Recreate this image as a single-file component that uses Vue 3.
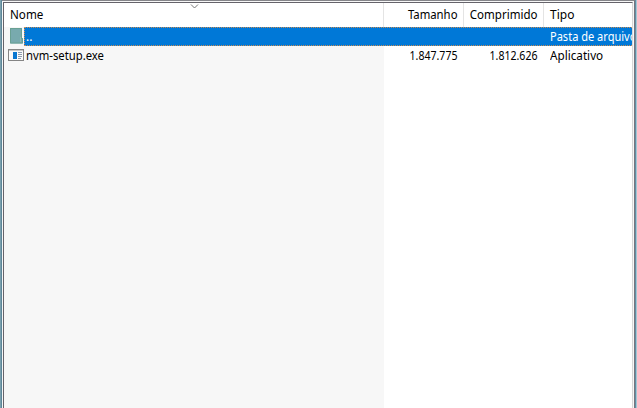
<script setup>
const files = [
  { name: '..', size: '', packed: '', type: 'Pasta de arquivos', kind: 'folder', selected: true },
  { name: 'nvm-setup.exe', size: '1.847.775', packed: '1.812.626', type: 'Aplicativo', kind: 'app', selected: false },
]
</script>

<template>
  <div class="window">
    <div class="panel">
      <div class="list">
        <header class="row head">
          <div class="cell name"><span class="t-nome">Nome</span>
            <svg class="sort" width="9" height="5" viewBox="0 0 9 5"><path d="M1 .5 4.5 4 8 .5" fill="none" stroke="#777" /></svg>
          </div>
          <div class="cell size"><span class="t-size">Tamanho</span></div>
          <div class="cell packed"><span class="t-packed">Comprimido</span></div>
          <div class="cell type"><span>Tipo</span></div>
        </header>
        <div v-for="f in files" :key="f.name" class="row item" :class="{ selected: f.selected }">
          <div class="icon">
            <svg v-if="f.kind === 'folder'" width="16" height="18" viewBox="0 0 16 18">
              <path d="M2 1H14V11H15V16.5H2Z" fill="#78aaae" />
              <path d="M2.5 1.5H13.5V11.5H14.5V16H2.5Z" fill="none" stroke="#69a093" />
              <path d="M12.5 10V15" stroke="#8fb9b4" />
            </svg>
            <svg v-else width="16" height="18" viewBox="0 0 16 18">
              <rect x=".5" y="3.5" width="15" height="11" fill="#fafafa" stroke="#858585" />
              <path d="M1 4.5H15" stroke="#c9c9c9" />
              <rect x="5" y="6" width="4" height="7" fill="#0877d1" />
              <path d="M10 6.5H14M10 8.5H14M10 10.5H14M10 12.5H13" stroke="#8d9cad" />
            </svg>
          </div>
          <div class="line">
            <div class="cell name"><span :class="{ 't-file': !f.selected }">{{ f.name }}</span></div>
            <div class="cell size"><span class="num">{{ f.size }}</span></div>
            <div class="cell packed"><span class="num">{{ f.packed }}</span></div>
            <div class="cell type"><span :class="f.selected ? 't-pasta' : 't-app'">{{ f.type }}</span></div>
          </div>
        </div>
        <div class="blank"><div class="sorted"></div></div>
      </div>
    </div>
  </div>
</template>

<style>
body { margin: 0; overflow: hidden; }
</style>
<style scoped>
* { box-sizing: border-box; }
.window {
  width: 637px; height: 408px; padding: 0 2px 0 2px;
  background: linear-gradient(90deg, #7ba0ad 0 1px, #5d8799 1px 2px, #fff 2px 635px, #628fa5 635px 636px, #a6c5d2 636px);
  font-family: "Noto Sans", "Open Sans", sans-serif; font-size: 12px; color: #000;
}
.panel {
  height: 408px; padding: 1px 1px 0 1px; border-top: 1px solid #85858a;
  border-right: 1px solid #77757d; background: #f7f7f7;
}
.list {
  height: 406px; width: 630px; border-top: 1px solid #65636a; border-left: 1px solid #65636a;
  border-right: 1px solid #d7d7d7; background: #fff; overflow: hidden; display: flex; flex-direction: column;
}
.row { display: flex; flex: none; white-space: nowrap; }
.head { height: 24px; line-height: 24px; }
.cell { flex: none; overflow: hidden; }
.cell span { display: inline-block; }
.head .cell { border-right: 1px solid #e4e4e4; }
.head .name { width: 380px; padding-left: 6px; position: relative; }
.head .size, .head .packed { width: 80px; padding-right: 6px; text-align: right; }
.head .packed { padding-left: 0; direction: ltr; }
.head .type { width: 88px; padding-left: 6px; border-right: 0; }
.sort { position: absolute; left: 186px; top: 1px; }
.item { height: 19px; line-height: 18px; }
.icon { width: 20px; padding-left: 4px; flex: none; background: #f7f7f7; }
.icon svg { display: block; }
.line { display: flex; width: 608px; overflow: hidden; border: 1px solid transparent; border-right: 0; line-height: 18px; }
.line .name { width: 359px; padding-left: 1px; }
.line .size, .line .packed { width: 80px; padding-right: 7px; text-align: right; }
.line .type { width: 89px; padding-left: 6px; }
.item:not(.selected) .line { background: linear-gradient(90deg, #f7f7f7 360px, #fff 360px) border-box; }
.selected .line { background: #0078d7; color: #fff; border: 1px dotted #ca8c52; border-right: 0; }
.t-nome, .t-file, .t-pasta, .t-app { transform-origin: left center; }
.t-size, .t-packed, .num { transform-origin: right center; }
.t-nome { transform: scaleX(.97); }
.t-size { transform: scaleX(.945); }
.t-packed { transform: scaleX(.96); }
.num { transform: scaleX(.88); }
.t-file { transform: scaleX(.94); }
.t-pasta { transform: scaleX(.92); }
.t-app { transform: scaleX(.975); }
.blank { flex: 1; }
.sorted { width: 380px; height: 100%; background: #f7f7f7; }
</style>
